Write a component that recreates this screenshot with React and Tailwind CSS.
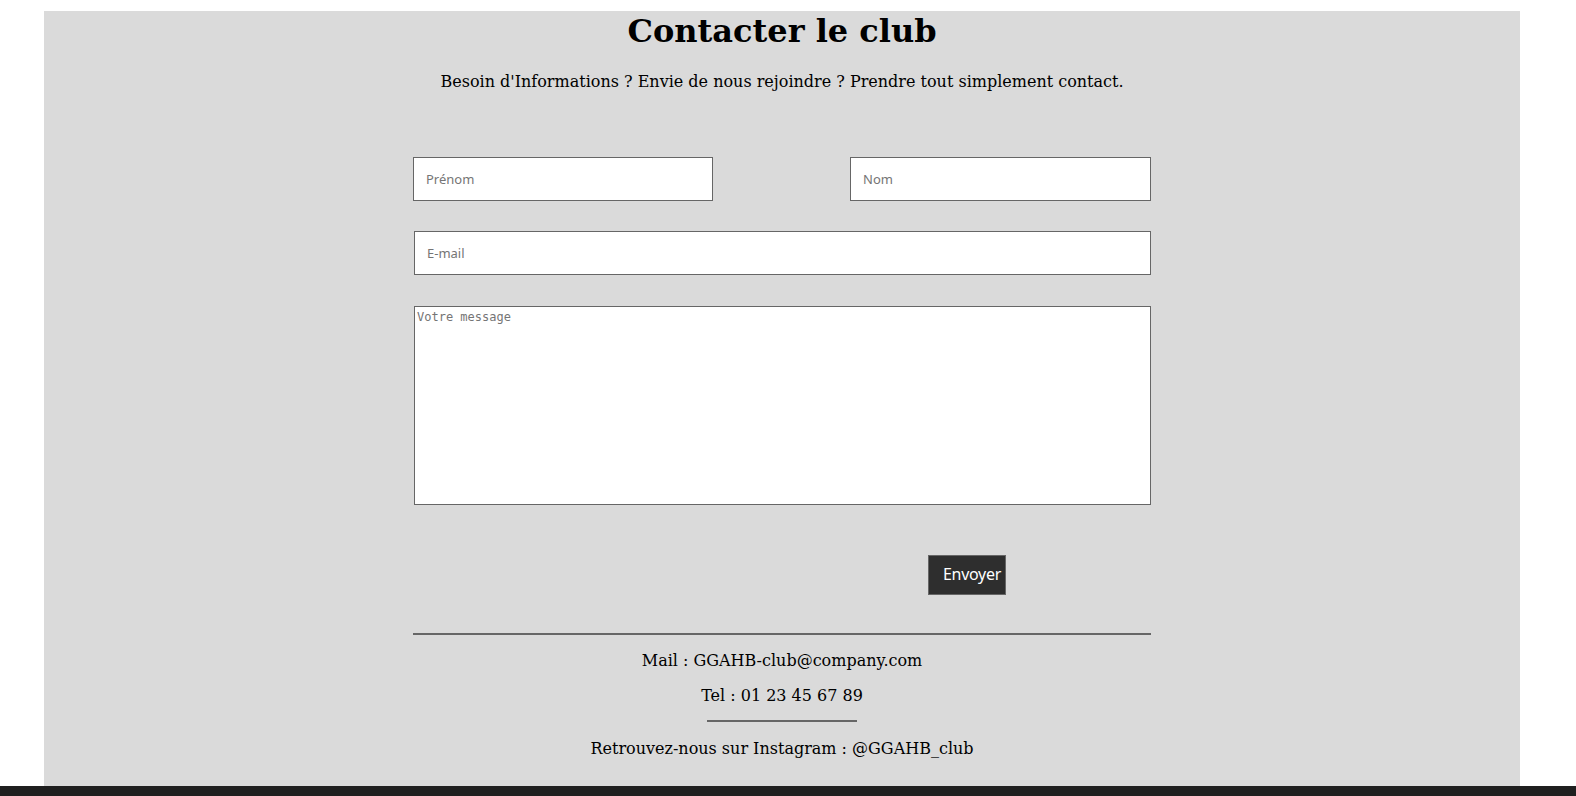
import React from "react";

const serif = { fontFamily: '"DejaVu Serif", "Liberation Serif", serif' };

export default function App() {
  return (
    <div className="bg-white min-h-screen pt-[11px]">
      <section
        className="ml-[44px] w-[1476px] bg-[#dadada] pb-[28px] text-black"
        style={serif}
      >
        <h1 className="pt-[2px] text-center text-[32px] font-bold leading-[37px]">
          Contacter le club
        </h1>
        <p className="mt-[22px] text-center text-[16px] leading-[19px]">
          Besoin d'Informations ? Envie de nous rejoindre ? Prendre tout simplement contact.
        </p>

        {/* formulaire */}
        <form className="mx-auto mt-[66px] w-[738px]">
          <div className="flex justify-between">
            <input
              type="text"
              placeholder="Prénom"
              className="h-[44px] w-[300px] border border-[#666] bg-white px-[12px] text-[13px] text-gray-800 placeholder:text-[#757575] font-['Noto_Sans',sans-serif] outline-none"
            />
            <input
              type="text"
              placeholder="Nom"
              className="h-[44px] w-[301px] border border-[#666] bg-white px-[12px] text-[13px] text-gray-800 placeholder:text-[#757575] font-['Noto_Sans',sans-serif] outline-none"
            />
          </div>
          <input
            type="email"
            placeholder="E-mail"
            className="mt-[30px] ml-[1px] block h-[44px] w-[737px] border border-[#666] bg-white px-[12px] text-[13px] text-gray-800 placeholder:text-[#757575] font-['Noto_Sans',sans-serif] outline-none"
          />
          <textarea
            placeholder="Votre message"
            className="mt-[31px] ml-[1px] block h-[199px] w-[737px] resize-none border border-[#666] bg-white px-[2px] py-[1px] text-[12px] text-gray-800 placeholder:text-[#757575] font-['DejaVu_Sans_Mono',monospace] outline-none"
          />
          <button
            type="button"
            className="mt-[50px] ml-[515px] block h-[40px] w-[78px] overflow-hidden whitespace-nowrap border border-[#666] bg-[#2e2e2e] pb-[3px] pl-[14px] text-left text-[16px] tracking-[-0.3px] text-white font-['Noto_Sans',sans-serif]"
          >
            Envoyer
          </button>
        </form>

        {/* coordonnées */}
        <div className="mx-auto mt-[38px] w-[738px] border-t-2 border-[#666]">
          <p className="mt-[16px] text-center text-[16px] leading-[19px]">
            Mail : GGAHB-club@company.com
          </p>
          <p className="mt-[16px] text-center text-[16px] leading-[19px]">
            Tel : 01 23 45 67 89
          </p>
          <div className="mx-auto mt-[15px] h-[2px] w-[150px] bg-[#666]" />
          <p className="mt-[17px] text-center text-[16px] leading-[19px]">
            Retrouvez-nous sur Instagram : @GGAHB_club
          </p>
        </div>
      </section>
      <footer className="h-[80px] bg-[#1f1f1f]" />
    </div>
  );
}
